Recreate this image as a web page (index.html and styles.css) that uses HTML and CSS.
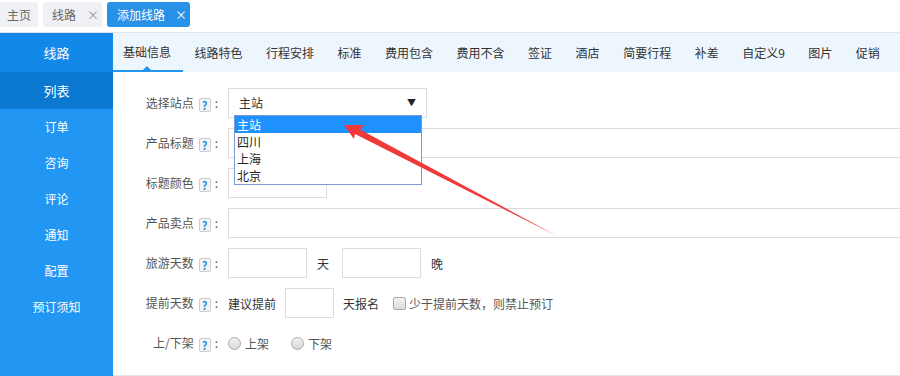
FILE: index.html
```html
<!DOCTYPE html>
<html lang="zh-CN">
<head>
  <meta charset="UTF-8" />
  <title>添加线路</title>
  <link rel="stylesheet" href="styles.css">
</head>
<body>

<div class="top-tabs">
  <span class="top-tab">主页</span>
  <span class="top-tab">线路<i class="close">×</i></span>
  <span class="top-tab active">添加线路<i class="close">×</i></span>
</div>

<div class="main">
  <div class="sidebar">
    <div class="side-title">线路</div>
    <div class="side-item current">列表</div>
    <div class="side-item">订单</div>
    <div class="side-item">咨询</div>
    <div class="side-item">评论</div>
    <div class="side-item">通知</div>
    <div class="side-item">配置</div>
    <div class="side-item">预订须知</div>
  </div>

  <div class="content">
    <div class="sub-tabs">
      <span class="sub-tab active">基础信息</span>
      <span class="sub-tab">线路特色</span>
      <span class="sub-tab">行程安排</span>
      <span class="sub-tab">标准</span>
      <span class="sub-tab">费用包含</span>
      <span class="sub-tab">费用不含</span>
      <span class="sub-tab">签证</span>
      <span class="sub-tab">酒店</span>
      <span class="sub-tab">简要行程</span>
      <span class="sub-tab">补差</span>
      <span class="sub-tab">自定义9</span>
      <span class="sub-tab">图片</span>
      <span class="sub-tab">促销</span>
    </div>

    <div class="form">
      <div class="row">
        <label class="lbl">选择站点<i class="help">?</i>:</label>
        <div class="select-wrap">
          <div class="select-box">主站<span class="caret">▼</span></div>
          <ul class="options">
            <li class="hover">主站</li>
            <li>四川</li>
            <li>上海</li>
            <li>北京</li>
          </ul>
        </div>
      </div>

      <div class="row">
        <label class="lbl">产品标题<i class="help">?</i>:</label>
        <input type="text" class="inp wide">
      </div>

      <div class="row">
        <label class="lbl">标题颜色<i class="help">?</i>:</label>
        <input type="text" class="inp color">
      </div>

      <div class="row">
        <label class="lbl">产品卖点<i class="help">?</i>:</label>
        <input type="text" class="inp wide">
      </div>

      <div class="row">
        <label class="lbl">旅游天数<i class="help">?</i>:</label>
        <input type="text" class="inp days">
        <span class="unit">天</span>
        <input type="text" class="inp days">
        <span class="unit">晚</span>
      </div>

      <div class="row">
        <label class="lbl">提前天数<i class="help">?</i>:</label>
        <span class="txt">建议提前</span>
        <input type="text" class="inp short">
        <span class="txt after">天报名</span>
        <span class="check"></span>
        <span class="txt muted">少于提前天数，则禁止预订</span>
      </div>

      <div class="row">
        <label class="lbl">上/下架<i class="help">?</i>:</label>
        <span class="radio"></span><span class="txt muted">上架</span>
        <span class="radio second"></span><span class="txt muted">下架</span>
      </div>
    </div>
  </div>
</div>

<!-- annotation arrow drawn over the screenshot -->
<svg class="arrow" width="900" height="376" viewBox="0 0 900 376">
  <polygon points="344,125 364,125 360,129.5 557,236 355,134 354,139" fill="#f03a3a"/>
</svg>

</body>
</html>
```

FILE: styles.css
```css
body {
  margin: 0;
  font-family: "Noto Sans CJK SC", "Noto Sans", sans-serif;
  font-size: 12px;
  color: #333;
  background: #fff;
  width: 900px;
  height: 376px;
  overflow: hidden;
  position: relative;
}

.top-tabs {
  height: 33px;
  box-sizing: border-box;
  border-bottom: 1px solid #dde5ee;
  display: flex;
  align-items: flex-start;
  gap: 5px;
  padding-top: 2px;
}

.top-tab {
  height: 25px;
  line-height: 25px;
  padding: 0 7px;
  background: #f0f1f4;
  color: #666;
  border-radius: 3px;
}

.top-tab .close {
  font-style: normal;
  color: #999;
  margin-left: 11px;
  font-size: 12px;
  display: inline-block;
  width: 9px;
}

.top-tab:nth-child(2) {
  padding: 0 6px 0 9px;
}

.top-tab.active {
  background: #2891e8;
  color: #fff;
  padding: 0 6px 0 10px;
}

.top-tab.active .close {
  color: #fff;
  margin-left: 10px;
}

.main {
  display: flex;
  height: 343px;
}

.sidebar {
  width: 113px;
  flex: none;
  background: #2196f3;
  color: #fff;
  text-align: center;
}

.side-title {
  height: 39px;
  line-height: 39px;
  background: #1288e8;
  font-size: 13px;
}

.side-item {
  height: 36px;
  line-height: 36px;
}

.side-item.current {
  height: 37px;
  line-height: 37px;
  background: #0b78d2;
  font-size: 13px;
}

.content {
  flex: 1;
  overflow: hidden;
  border-bottom: 1px solid #e5e5e5;
  box-sizing: border-box;
}

.sub-tabs {
  height: 39px;
  background: #eef6fd;
  display: flex;
  white-space: nowrap;
}

.sub-tab {
  padding: 0 11.75px;
  line-height: 39px;
  color: #333;
  position: relative;
}

.sub-tab.active {
  padding-left: 10px;
  border-bottom: 2px solid #2196f3;
  box-sizing: border-box;
  line-height: 37px;
}

.sub-tab.active::after {
  content: "";
  position: absolute;
  left: 30px;
  bottom: 0;
  border: 4px solid transparent;
  border-bottom-color: #2196f3;
}

.form {
  padding-top: 16px;
}

.row {
  display: flex;
  align-items: center;
  height: 30px;
  margin-bottom: 10px;
  white-space: nowrap;
}

.lbl {
  width: 105px;
  margin-right: 10px;
  text-align: right;
  color: #555;
  flex: none;
}

.help {
  display: inline-block;
  width: 10px;
  height: 12px;
  line-height: 12px;
  border: 1px solid #ccc;
  border-radius: 2px;
  background: #f4f4f4;
  color: #1a8ae6;
  font-style: normal;
  font-weight: bold;
  font-size: 11px;
  text-align: center;
  vertical-align: -2px;
  margin: 0 4px 0 5px;
}

.inp {
  height: 30px;
  box-sizing: border-box;
  border: 1px solid #ddd;
  padding: 0 8px;
  font: inherit;
  flex: none;
}

.inp.wide {
  width: 700px;
}

.inp.color {
  width: 99px;
}

.inp.days {
  width: 79px;
}

.inp.short {
  width: 49px;
  margin: 0 9px 0 9px;
}

.unit {
  margin: 0 13px 0 10px;
  color: #333;
}

.txt {
  color: #333;
}

.txt.muted {
  color: #555;
}

.txt.after {
  margin-right: 14px;
}

.select-wrap {
  position: relative;
}

.select-box {
  width: 199px;
  height: 30px;
  line-height: 28px;
  box-sizing: border-box;
  border: 1px solid #ddd;
  padding-left: 10px;
  position: relative;
  color: #333;
}

.caret {
  position: absolute;
  right: 10px;
  top: 0;
  font-size: 9px;
  color: #222;
}

.options {
  position: absolute;
  left: 6px;
  top: 27px;
  width: 188px;
  box-sizing: border-box;
  margin: 0;
  padding: 0;
  list-style: none;
  border: 1px solid #7a9ad0;
  background: #fff;
  z-index: 5;
}

.options li {
  height: 17px;
  line-height: 17px;
  padding-left: 2px;
  color: #222;
}

.options li.hover {
  background: #1e90ff;
  color: #fff;
}

.check {
  width: 11px;
  height: 11px;
  border: 1px solid #aaa;
  border-radius: 2px;
  background: linear-gradient(#f2f2f2, #dcdcdc);
  margin-right: 3px;
}

.radio {
  width: 11px;
  height: 11px;
  border: 1px solid #aaa;
  border-radius: 50%;
  background: linear-gradient(#f2f2f2, #d8d8d8);
  margin-right: 4px;
}

.radio.second {
  margin-left: 22px;
}

.arrow {
  position: absolute;
  left: 0;
  top: 0;
  z-index: 10;
  pointer-events: none;
}
```
